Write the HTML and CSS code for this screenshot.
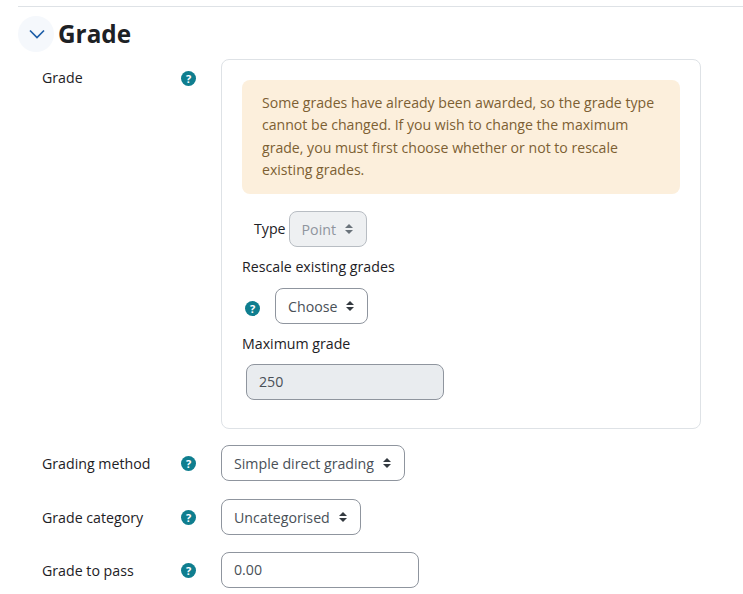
FILE: index.html
```html
<!DOCTYPE html>
<html lang="en">
<head>
<meta charset="utf-8">
<title>Grade</title>
<link rel="stylesheet" href="styles.css">
</head>
<body>
<section class="section">
  <header class="section-head">
    <span class="toggle"><svg class="chevron" width="16" height="10" viewBox="0 0 16 10"><path d="M1 1.5l7 7 7-7" fill="none" stroke="#1d5ea8" stroke-width="1.7"/></svg></span>
    <h2 class="title">Grade</h2>
  </header>
  <div class="row row-grade">
    <div class="label">Grade</div>
    <div class="help-cell"><span class="help">?</span></div>
    <div class="panel">
      <div class="alert">Some grades have already been awarded, so the grade type cannot be changed. If you wish to change the maximum grade, you must first choose whether or not to rescale existing grades.</div>
      <div class="type-row">
        <span class="inner-label">Type</span>
        <span class="select select-disabled">Point<svg class="caret" width="10" height="12" viewBox="0 0 10 12"><path d="M5 1l4 4H1zM5 11L1 7h8z" fill="#6a737b"/></svg></span>
      </div>
      <div class="inner-label rescale">Rescale existing grades</div>
      <div class="choose-row">
        <span class="help">?</span>
        <span class="select">Choose<svg class="caret" width="10" height="12" viewBox="0 0 10 12"><path d="M5 1l4 4H1zM5 11L1 7h8z" fill="#343a40"/></svg></span>
      </div>
      <div class="inner-label maximum">Maximum grade</div>
      <div class="input input-disabled">250</div>
    </div>
  </div>
  <div class="row row-method">
    <div class="label">Grading method</div>
    <div class="help-cell"><span class="help">?</span></div>
    <span class="select">Simple direct grading<svg class="caret" width="10" height="12" viewBox="0 0 10 12"><path d="M5 1l4 4H1zM5 11L1 7h8z" fill="#343a40"/></svg></span>
  </div>
  <div class="row row-category">
    <div class="label">Grade category</div>
    <div class="help-cell"><span class="help">?</span></div>
    <span class="select">Uncategorised<svg class="caret" width="10" height="12" viewBox="0 0 10 12"><path d="M5 1l4 4H1zM5 11L1 7h8z" fill="#343a40"/></svg></span>
  </div>
  <div class="row row-pass">
    <div class="label">Grade to pass</div>
    <div class="help-cell"><span class="help">?</span></div>
    <div class="input">0.00</div>
  </div>
</section>
</body>
</html>
```
FILE: styles.css
```css
html, body {
  margin: 0;
  padding: 0;
  background: #fff;
  overflow: hidden;
}
body {
  font-family: "Open Sans", "Noto Sans", sans-serif;
  font-size: 14.2px;
  color: #1d2125;
  height: 594px;
}
.section {
  margin: 6px 0 0 18px;
  border-top: 1px solid #dee2e6;
}
.section-head {
  display: flex;
  align-items: center;
  gap: 4px;
  height: 36px;
  margin-top: 9px;
}
.toggle {
  width: 36px;
  height: 36px;
  border-radius: 50%;
  background: #f5f8fc;
  display: flex;
  align-items: center;
  justify-content: center;
}
.chevron { margin-left: 1px; }
.title {
  margin: 0;
  font-size: 24.3px;
  font-weight: 700;
  line-height: 36px;
}
.row {
  display: flex;
  align-items: center;
  padding-left: 24px;
}
.row-grade { align-items: flex-start; margin-top: 7px; }
.row-method { margin-top: 16px; }
.row-category { margin-top: 18px; }
.row-pass { margin-top: 17px; }
.label {
  width: 139px;
  flex: none;
}
.row-grade .label { margin-top: 9px; }
.help-cell {
  width: 40px;
  flex: none;
  display: flex;
}
.row-grade .help-cell { margin-top: 12px; }
.row-pass .help-cell { margin-top: 1px; }
.help {
  width: 15px;
  height: 15px;
  border-radius: 50%;
  background: #0f7e8f;
  color: #fff;
  font-size: 11px;
  font-weight: 700;
  line-height: 15px;
  text-align: center;
  flex: none;
}
.panel {
  box-sizing: border-box;
  width: 480px;
  height: 370px;
  border: 1px solid #dee2e6;
  border-radius: 8px;
  padding: 20px;
}
.alert {
  background: #fcefdc;
  color: #7d5f33;
  border-radius: 8px;
  padding: 12px 20px;
  font-size: 14.1px;
  line-height: 22.4px;
  height: 114px;
  box-sizing: border-box;
}
.type-row {
  display: flex;
  align-items: center;
  gap: 3px;
  margin-top: 17px;
  padding-left: 12px;
}
.inner-label { line-height: 20px; }
.select {
  box-sizing: border-box;
  display: inline-flex;
  align-items: center;
  height: 36px;
  padding: 0 12px;
  border: 1px solid #8f959e;
  border-radius: 8px;
  color: #495057;
  background: #fff;
}
.select-disabled {
  background: #eef0f2;
  border-color: #b8bdc3;
  color: #8f959e;
}
.caret { margin-left: 8px; }
.rescale { margin-top: 10px; }
.choose-row {
  display: flex;
  align-items: center;
  gap: 15px;
  margin-top: 11px;
  padding-left: 3px;
}
.choose-row .help { margin-top: 5px; }
.maximum { margin-top: 10px; }
.input {
  box-sizing: border-box;
  width: 198px;
  height: 36px;
  line-height: 34px;
  padding: 0 12px;
  border: 1px solid #8f959e;
  border-radius: 8px;
  color: #495057;
  background: #fff;
}
.input-disabled {
  background: #e9ecef;
  margin: 10px 0 0 4px;
}
```
